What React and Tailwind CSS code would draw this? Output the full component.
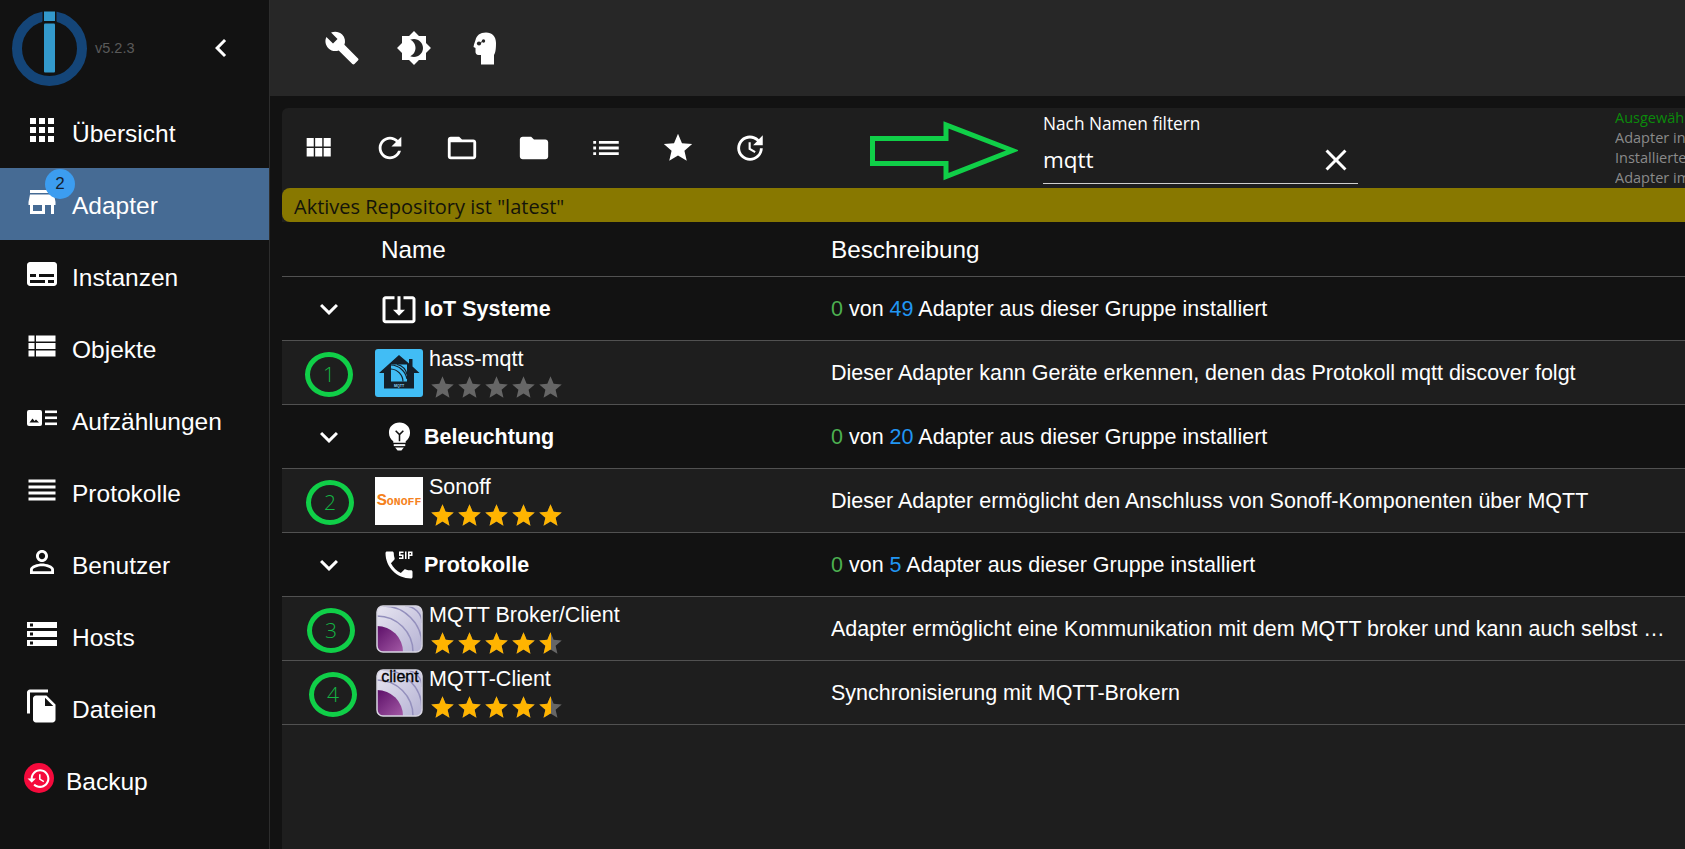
const P = {
  apps: "M4 8h4V4H4v4zm6 12h4v-4h-4v4zm-6 0h4v-4H4v4zm0-6h4v-4H4v4zm6 0h4v-4h-4v4zm6-10v4h4V4h-4zm-6 4h4V4h-4v4zm6 6h4v-4h-4v4zm0 6h4v-4h-4v4z",
  store: "M20 4H4v2h16V4zm1 10v-2l-1-5H4l-1 5v2h1v6h10v-6h4v6h2v-6h1zm-9 4H6v-4h6v4z",
  subtitles: "M20 4H4c-1.1 0-2 .9-2 2v12c0 1.1.9 2 2 2h16c1.1 0 2-.9 2-2V6c0-1.1-.9-2-2-2zM4 12h4v2H4v-2zm10 6H4v-2h10v2zm6 0h-4v-2h4v2zm0-4H10v-2h10v2z",
  viewList: "M3 14h4v-4H3v4zm0 5h4v-4H3v4zM3 9h4V5H3v4zm5 5h13v-4H8v4zm0 5h13v-4H8v4zM8 5v4h13V5H8z",
  reorder: "M3 15h18v-2H3v2zm0 4h18v-2H3v2zm0-8h18V9H3v2zm0-6v2h18V5H3z",
  person: "M12 5.9c1.16 0 2.1.94 2.1 2.1s-.94 2.1-2.1 2.1S9.9 9.16 9.9 8s.94-2.1 2.1-2.1m0 9c2.97 0 6.1 1.46 6.1 2.1v1.1H5.9V17c0-.64 3.13-2.1 6.1-2.1M12 4C9.79 4 8 5.79 8 8s1.79 4 4 4 4-1.79 4-4-1.79-4-4-4zm0 9c-2.67 0-8 1.34-8 4v3h16v-3c0-2.66-5.33-4-8-4z",
  storage: "M2 20h20v-4H2v4zm2-3h2v2H4v-2zM2 4v4h20V4H2zm4 3H4V5h2v2zm-4 7h20v-4H2v4zm2-3h2v2H4v-2z",
  fileCopy: "M16 1H4c-1.1 0-2 .9-2 2v14h2V3h12V1zm-1 4l6 6v10c0 1.1-.9 2-2 2H7.99C6.89 23 6 22.1 6 21l.01-14c0-1.1.89-2 1.99-2h7zm-1 7h5.5L14 6.5V12z",
  history: "M13 3c-4.97 0-9 4.03-9 9H1l3.89 3.89.07.14L9 12H6c0-3.87 3.13-7 7-7s7 3.13 7 7-3.13 7-7 7c-1.93 0-3.68-.79-4.94-2.06l-1.42 1.42C8.27 19.99 10.51 21 13 21c4.97 0 9-4.03 9-9s-4.03-9-9-9zm-1 5v5l4.28 2.54.72-1.21-3.5-2.08V8H12z",
  build: "M22.7 19l-9.1-9.1c.9-2.3.4-5-1.5-6.9-2-2-5-2.4-7.4-1.3L9 6 6 9 1.6 4.7C.4 7.1.9 10.1 2.9 12.1c1.9 1.9 4.6 2.4 6.9 1.5l9.1 9.1c.4.4 1 .4 1.4 0l2.3-2.3c.5-.4.5-1.1.1-1.4z",
  brightness: "M20 8.69V4h-4.69L12 .69 8.69 4H4v4.69L.69 12 4 15.31V20h4.69L12 23.31 15.31 20H20v-4.69L23.31 12 20 8.69zM12 18c-.89 0-1.74-.2-2.5-.55C11.56 16.5 13 14.42 13 12s-1.44-4.5-3.5-5.45C10.26 6.2 11.11 6 12 6c3.31 0 6 2.69 6 6s-2.69 6-6 6z",
  refresh: "M17.65 6.35C16.2 4.9 14.21 4 12 4c-4.42 0-7.99 3.58-7.99 8s3.57 8 7.99 8c3.73 0 6.84-2.55 7.73-6h-2.08c-.82 2.33-3.04 4-5.65 4-3.31 0-6-2.69-6-6s2.69-6 6-6c1.66 0 3.14.69 4.22 1.78L13 11h7V4l-2.35 2.35z",
  folderOpen: "M20 6h-8l-2-2H4c-1.1 0-1.99.9-1.99 2L2 18c0 1.1.9 2 2 2h16c1.1 0 2-.9 2-2V8c0-1.1-.9-2-2-2zm0 12H4V8h16v10z",
  folder: "M10 4H4c-1.1 0-1.99.9-1.99 2L2 18c0 1.1.9 2 2 2h16c1.1 0 2-.9 2-2V8c0-1.1-.9-2-2-2h-8l-2-2z",
  module: "M4 11h5V5H4v6zm0 7h5v-6H4v6zm6 0h5v-6h-5v6zm6 0h5v-6h-5v6zm-6-7h5V5h-5v6zm6-6v6h5V5h-5z",
  list: "M3 13h2v-2H3v2zm0 4h2v-2H3v2zm0-8h2V7H3v2zm4 4h14v-2H7v2zm0 4h14v-2H7v2zM7 7v2h14V7H7z",
  star: "M12 17.27L18.18 21l-1.64-7.03L22 9.24l-7.19-.61L12 2 9.19 8.63 2 9.24l5.46 4.73L5.82 21z",
  update: "M21 10.12h-6.78l2.74-2.82c-2.73-2.7-7.15-2.8-9.88-.1-2.73 2.71-2.73 7.08 0 9.79s7.15 2.71 9.88 0C18.32 15.65 19 14.08 19 12.1h2c0 1.98-.88 4.55-2.64 6.29-3.51 3.48-9.21 3.48-12.72 0-3.5-3.47-3.53-9.11-.02-12.58s9.14-3.47 12.65 0L21 3v7.12zM12.5 8v4.25l3.5 2.08-.72 1.21L11 13V8h1.5z",
  close: "M19 6.41L17.59 5 12 10.59 6.41 5 5 6.41 10.59 12 5 17.59 6.41 19 12 13.41 17.59 19 19 17.59 13.41 12z",
  expand: "M16.59 8.59L12 13.17 7.41 8.59 6 10l6 6 6-6z",
  chevronLeft: "M15.41 7.41L14 6l-6 6 6 6 1.41-1.41L10.83 12z",
  iot: "M12 16.5l4-4h-3v-9h-2v9H8l4 4zm9-13h-6v1.99h6v14.03H3V5.49h6V3.5H3c-1.1 0-2 .9-2 2v14c0 1.1.9 2 2 2h18c1.1 0 2-.9 2-2v-14c0-1.1-.9-2-2-2z",
  sip: "M17 3h-1v5h1V3zm-2 2h-2V4h2V3h-3v3h2v1h-2v1h3V5zm3-2v5h1V6h2V3h-3zm2 2h-1V4h1v1zm0 10.5c-1.25 0-2.45-.2-3.57-.57-.35-.11-.74-.03-1.01.24l-2.2 2.2c-2.83-1.44-5.15-3.75-6.59-6.59l2.2-2.21c.27-.26.35-.65.24-1C8.7 6.45 8.5 5.25 8.5 4c0-.55-.45-1-1-1H4c-.55 0-1 .45-1 1 0 9.39 7.61 17 17 17 .55 0 1-.45 1-1v-3.5c0-.55-.45-1-1-1z",
};

const Icon = ({ d, className = "w-9 h-9" }) => (
  <svg viewBox="0 0 24 24" fill="currentColor" className={className}>
    <path d={d} />
  </svg>
);

const Enums = () => (
  <svg viewBox="0 0 30 16" className="w-[30px] h-4 block">
    <rect x="0" y="0" width="15" height="16" rx="2" fill="#fff" />
    <path d="M2.5 12.5l3-4 2 2.5 1.5-1.5 3 3z" fill="#121212" />
    <rect x="18" y="0.5" width="12" height="2.6" fill="#fff" />
    <rect x="18" y="6.5" width="12" height="2.6" fill="#fff" />
    <rect x="18" y="12.5" width="12" height="2.6" fill="#fff" />
  </svg>
);

const Head = () => (
  <svg viewBox="0 0 23 33" className="w-[23px] h-[33px] relative -left-[2px]">
    <path
      d="M13 0.5C7 0.5 3.5 3.5 2.5 8L1 12.5 0.5 15 2.5 16V20C2.5 21.5 3.5 23 5.5 23H8V32.5H21V23C22.5 20.5 23 17 23 11 23 4.5 19 0.5 13 0.5Z"
      fill="#fff"
    />
    <circle cx="6" cy="11.5" r="2.1" fill="#272727" />
    <circle cx="10.5" cy="9" r="1.7" fill="#272727" />
    <path d="M7.5 10.5L9.5 9.5" stroke="#272727" strokeWidth="1" />
  </svg>
);

const Bulb = () => (
  <svg viewBox="0 0 24 30" className="w-[23px] h-[29px]">
    <path
      d="M12 0.5C5.5 0.5 1 5 1 11c0 4 2 7 4.5 9v1.5h13V20c2.500-2 4.500-5 4.500-9C23 5 18.500 0.500 12 0.500z"
      fill="#fff"
    />
    <path d="M8 9l4 4 4-4M12 13v7" stroke="#121212" strokeWidth="1.6" fill="none" />
    <rect x="6" y="23" width="12" height="2" fill="#fff" />
    <path d="M7.500 26.500h9L14 29.500h-4z" fill="#fff" />
  </svg>
);

const Logo = () => (
  <svg viewBox="0 0 75 75" className="w-[75px] h-[75px] shrink-0">
    <circle cx="37.500" cy="37.500" r="32.500" fill="none" stroke="#144578" strokeWidth="10" />
    <rect x="30.500" y="0" width="14" height="12" fill="#121212" />
    <rect x="32" y="0.500" width="11" height="9.500" fill="#3399cc" />
    <rect x="30.500" y="10" width="14" height="53" fill="#121212" />
    <rect x="32" y="12.500" width="11" height="49" rx="1" fill="#3399cc" />
  </svg>
);

const HassLogo = () => (
  <svg viewBox="0 0 48 48" className="w-12 h-12 shrink-0">
    <rect width="48" height="48" rx="3" fill="#41bdf5" />
    <path d="M24 6L34 14.500V10h3.500v7.500L44.500 24H39V39.500H9V24H4z" fill="#14202a" />
    <rect x="16" y="15.500" width="16" height="17" fill="#41bdf5" />
    <path d="M16 20a13 13 0 0 1 12 12.500M16 16a17 17 0 0 1 16 14M22 15.500a13 13 0 0 1 10 10" fill="none" stroke="#14202a" strokeWidth="1.200" />
    <text x="24" y="37.800" textAnchor="middle" fontSize="3.600" fontWeight="700" fill="#8fd4f5" fontFamily="'Liberation Sans', sans-serif">MQTT</text>
  </svg>
);

const MqttLogo = ({ client, id }) => (
  <svg viewBox="0 0 48 48" className="w-12 h-12 shrink-0">
    <defs>
      <linearGradient id={id + "a"} x1="0" y1="0" x2="1" y2="1">
        <stop offset="0" stopColor="#e9e7f2" />
        <stop offset="1" stopColor="#b4b1d3" />
      </linearGradient>
      <linearGradient id={id + "b"} x1="0" y1="0" x2="1" y2="1">
        <stop offset="0" stopColor="#5c0f68" />
        <stop offset="1" stopColor="#a45aa6" />
      </linearGradient>
      <clipPath id={id + "c"}>
        <rect x="2" y="1" width="45" height="46" rx="6" />
      </clipPath>
    </defs>
    <g clipPath={`url(#${id}c)`}>
      <rect width="48" height="48" fill={`url(#${id}a)`} />
      <path d="M2 21a26 26 0 0 1 26 26H2z" fill={`url(#${id}b)`} />
      <path d="M2 11a36 36 0 0 1 36 36M8 1a39 39 0 0 1 39 39M30 1a17 17 0 0 1 17 17" fill="none" stroke="#9490bd" strokeWidth="1.500" />
    </g>
    <rect x="2" y="1" width="45" height="46" rx="6" fill="none" stroke="#d8d6e2" strokeWidth="1.500" />
    {client && (
      <text x="25" y="13" textAnchor="middle" fontSize="16" fill="#000" stroke="#000" strokeWidth="0.3" fontFamily="'Liberation Sans', sans-serif">client</text>
    )}
  </svg>
);

const SonoffLogo = () => (
  <div className="w-12 h-12 bg-white shrink-0 flex items-center justify-center overflow-hidden">
    <span className="text-[#f58220] font-bold leading-none font-['Liberation_Mono',monospace] flex items-baseline">
      <span className="text-[17px]">S</span>
      <span className="text-[11.500px]">ONOFF</span>
    </span>
  </div>
);

const Stars = ({ value }) => (
  <div className="flex mt-[3px]">
    {[0, 1, 2, 3, 4].map((i) => {
      const fill = Math.max(0, Math.min(1, value - i));
      return (
        <div key={i} className="relative w-[27px] h-[27px] text-[#666666]">
          <Icon d={P.star} className="w-[27px] h-[27px]" />
          {fill > 0 && (
            <div className="absolute inset-y-0 left-0 overflow-hidden text-[#ffb400]" style={{ width: `${fill * 100}%` }}>
              <Icon d={P.star} className="w-[27px] h-[27px]" />
            </div>
          )}
        </div>
      );
    })}
  </div>
);

const menu = [
  ["Übersicht", <Icon d={P.apps} />],
  ["Adapter", <Icon d={P.store} />, true],
  ["Instanzen", <Icon d={P.subtitles} />],
  ["Objekte", <Icon d={P.viewList} />],
  ["Aufzählungen", <div className="w-9 h-9 flex items-center justify-center"><Enums /></div>],
  ["Protokolle", <Icon d={P.reorder} />],
  ["Benutzer", <Icon d={P.person} />],
  ["Hosts", <Icon d={P.storage} />],
  ["Dateien", <Icon d={P.fileCopy} />],
];

const Sidebar = () => (
  <aside className="w-[270px] shrink-0 bg-[#121212] border-r border-[#2d2d2d] text-white flex flex-col">
    <div className="h-24 flex items-center pl-3 pr-[30px]">
      <Logo />
      <span className="ml-2 text-[14.500px] text-[#5a5a5a] relative top-[1px]">v5.2.3</span>
      <div className="ml-auto"><Icon d={P.chevronLeft} /></div>
    </div>
    {menu.map(([label, icon, active]) => (
      <div key={label} className={`h-[72px] shrink-0 flex items-center pl-6 relative ${active ? "bg-[#466b94]" : ""}`}>
        <div className="w-9 h-9 relative -top-[2px]">{icon}</div>
        <span className="ml-3 text-[24.500px] leading-none relative top-[2px]">{label}</span>
        {active && (
          <span className="absolute left-[45px] top-[1px] w-[30px] h-[30px] rounded-full bg-[#3c9df0] text-[#14202e] text-[17px] flex items-center justify-center">2</span>
        )}
      </div>
    ))}
    <div className="h-[72px] shrink-0 flex items-center pl-6">
      <div className="w-[30px] h-[30px] rounded-full bg-[#f50a3c] flex items-center justify-center relative -top-[2px]">
        <Icon d={P.history} className="w-[25px] h-[25px] -translate-x-[0.5px]" />
      </div>
      <span className="ml-3 text-[24.500px] leading-none relative top-[2px]">Backup</span>
    </div>
  </aside>
);

const TopBar = () => (
  <header className="h-24 shrink-0 bg-[#272727] text-white flex items-center pl-9">
    <div className="w-[72px] h-[72px] flex items-center justify-center"><Icon d={P.build} /></div>
    <div className="w-[72px] h-[72px] flex items-center justify-center"><Icon d={P.brightness} /></div>
    <div className="w-[72px] h-[72px] flex items-center justify-center"><Head /></div>
  </header>
);

const Arrow = () => (
  <svg viewBox="0 0 148 60" className="w-[148px] h-[60px] shrink-0">
    <path d="M2.500 17.500H76V4L142.500 29.500 76 55.500V42.500H2.500z" fill="none" stroke="#10cf48" strokeWidth="5" />
  </svg>
);

const Toolbar = () => (
  <div className="h-20 flex items-center text-white relative">
    <div className="flex items-center">
      {[P.module, P.refresh, P.folderOpen, P.folder, P.list, P.star, P.update].map((d, i) => (
        <div key={i} className="w-[72px] h-[72px] flex items-center justify-center"><Icon d={d} className="w-[34px] h-[34px]" /></div>
      ))}
    </div>
    <div className="ml-[84px] mt-[6px]"><Arrow /></div>
    <div className="ml-[25px] w-[315px] h-[76px] shrink-0 self-start relative font-['Open_Sans',sans-serif]">
      <div className="text-[17.300px] leading-6 pt-[4px] h-[28px]">Nach Namen filtern</div>
      <div className="flex items-center justify-between border-b border-[#cfcfcf] h-[48px]">
        <span className="text-[22.500px] leading-none relative top-[1px]">mqtt</span>
        <Icon d={P.close} className="w-[36px] h-[36px] mr-[4px]" />
      </div>
    </div>
    <div className="ml-auto w-[70px] h-20 shrink-0 overflow-hidden whitespace-nowrap text-[14.500px] leading-[20px] text-[#8a8a8a] font-['Open_Sans',sans-serif]">
      <div className="text-[#0b8a0b]">Ausgewählt</div>
      <div>Adapter in</div>
      <div>Installierte</div>
      <div>Adapter im</div>
    </div>
  </div>
);

const Count = ({ total }) => (
  <>
    <span className="text-[#4caf50]">0</span> von <span className="text-[#2196f3]">{total}</span> Adapter aus dieser Gruppe installiert
  </>
);

const GroupRow = ({ icon, title, total }) => (
  <div className="h-16 flex items-center bg-[#121212] border-b border-[#515151]">
    <div className="w-[94px] shrink-0 flex justify-center">
      <Icon d={P.expand} />
    </div>
    <div className="w-[455px] shrink-0 flex items-center">
      <div className="w-9 h-9 flex items-center justify-center ml-[5px]">{icon}</div>
      <span className="ml-[7px] font-bold text-[21.500px] leading-none relative top-[1px]">{title}</span>
    </div>
    <div className="text-[21.500px] whitespace-nowrap relative top-[1px]"><Count total={total} /></div>
  </div>
);

const AdapterRow = ({ n, nx, logo, name, rating, desc }) => (
  <div className="h-16 flex items-center bg-[#1e1e1e] border-b border-[#515151]">
    <div className="w-[93px] shrink-0 flex">
      <div style={{ marginLeft: nx }} className="w-[48px] h-[45px] rounded-[50%] border-[5px] border-[#10cf48] flex items-center justify-center text-[#14b644] text-[21px] font-light relative top-[2px] font-['Open_Sans',sans-serif]">{n}</div>
    </div>
    {logo}
    <div className="ml-[6px] w-[402px] shrink-0 flex flex-col relative top-[1px]">
      <span className="text-[21.500px] leading-6">{name}</span>
      <Stars value={rating} />
    </div>
    <div className="text-[21.500px] whitespace-nowrap truncate pr-[10px] flex-1 min-w-0 relative top-[1px]">{desc}</div>
  </div>
);

const Table = () => (
  <div className="text-white font-['Liberation_Sans',sans-serif]">
    <div className="h-[55px] flex items-center bg-[#121212] border-b border-[#515151] text-[24.300px]">
      <div className="w-[99px] shrink-0" />
      <div className="w-[450px] shrink-0 relative top-[1px]">Name</div>
      <div className="relative top-[1px]">Beschreibung</div>
    </div>
    <GroupRow icon={<Icon d={P.iot} />} title="IoT Systeme" total={49} />
    <AdapterRow n="1" nx="23px" logo={<HassLogo />} name="hass-mqtt" rating={0} desc="Dieser Adapter kann Geräte erkennen, denen das Protokoll mqtt discover folgt" />
    <GroupRow icon={<Bulb />} title="Beleuchtung" total={20} />
    <AdapterRow n="2" nx="24px" logo={<SonoffLogo />} name="Sonoff" rating={5} desc="Dieser Adapter ermöglicht den Anschluss von Sonoff-Komponenten über MQTT" />
    <GroupRow icon={<Icon d={P.sip} />} title="Protokolle" total={5} />
    <AdapterRow n="3" nx="25px" logo={<MqttLogo id="m1" />} name="MQTT Broker/Client" rating={4.5} desc="Adapter ermöglicht eine Kommunikation mit dem MQTT broker und kann auch selbst MQTT Broker sein" />
    <AdapterRow n="4" nx="27px" logo={<MqttLogo id="m2" client />} name="MQTT-Client" rating={4.5} desc="Synchronisierung mit MQTT-Brokern" />
  </div>
);

export default function App() {
  return (
    <div className="h-[849px] w-[1685px] flex overflow-hidden bg-[#121212] text-white font-['Liberation_Sans',sans-serif]">
      <Sidebar />
      <main className="flex-1 min-w-0 flex flex-col">
        <TopBar />
        <div className="flex-1 min-h-0 pt-3 pl-3">
          <div className="h-full bg-[#1e1e1e] rounded-tl-md overflow-hidden">
            <Toolbar />
            <div className="h-[34px] bg-[#887800] rounded-l-lg flex items-center pl-3 text-[#14140a] text-[20px] font-['Open_Sans',sans-serif]">
              <span className="relative top-[2px]">Aktives Repository ist "latest"</span>
            </div>
            <Table />
          </div>
        </div>
      </main>
    </div>
  );
}
